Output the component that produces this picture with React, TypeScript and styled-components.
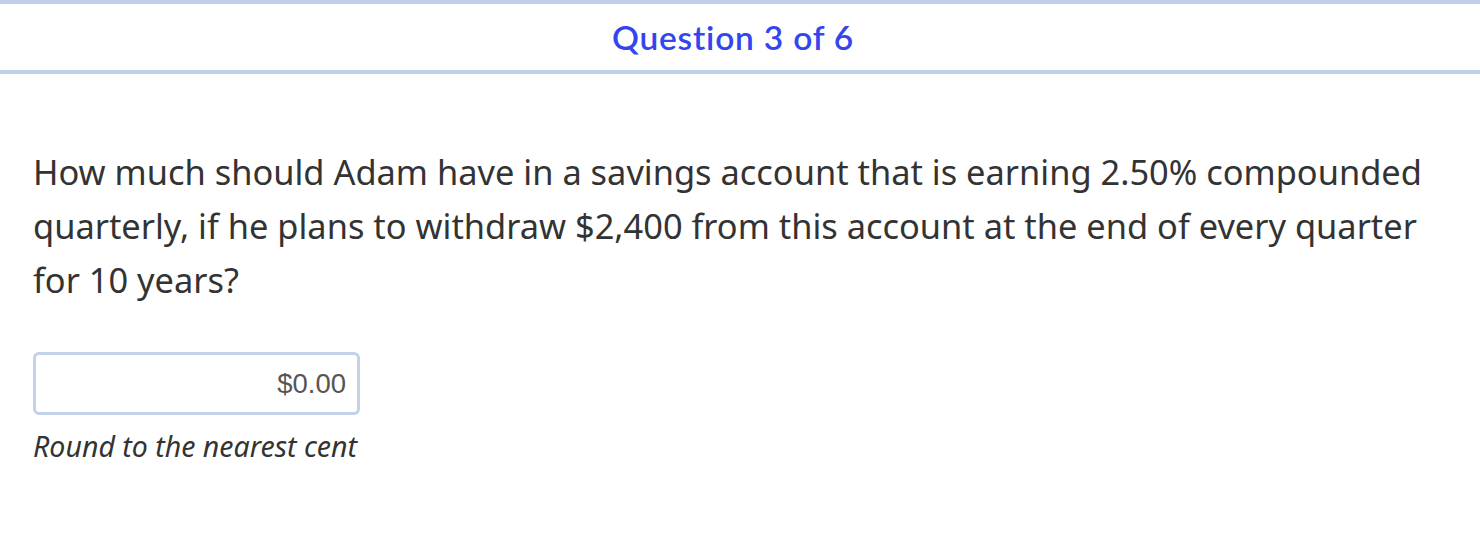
import styled, { createGlobalStyle } from "styled-components";

const GlobalStyle = createGlobalStyle`
	html, body {
		margin: 0;
		padding: 0;
		background: #ffffff;
	}
`;

const Page = styled.div`
	width: 1480px;
	height: 556px;
	overflow: hidden;
	background: #ffffff;
`;

const Header = styled.div`
	height: 66px;
	padding-right: 14px;
	border-top: 4px solid #bfcfe7;
	border-bottom: 4px solid #bfcfe7;
	display: flex;
	align-items: center;
	justify-content: center;
	font-family: Lato, "Open Sans", sans-serif;
	font-weight: 600;
	font-size: 33.5px;
	letter-spacing: 0.8px;
	color: #3346ee;
`;

const Body = styled.div`
	padding: 71px 33px 0 33px;
	font-family: "Noto Sans", "Open Sans", sans-serif;
	color: #333333;
`;

const QuestionText = styled.p`
	margin: 0;
	font-size: 34.4px;
	line-height: 54px;
`;

const AnswerField = styled.input`
	display: block;
	box-sizing: border-box;
	margin-top: 45px;
	width: 327px;
	height: 63px;
	border: 3px solid #c2d2e8;
	border-radius: 6px;
	padding: 0 11px;
	text-align: right;
	font-family: "Liberation Sans", Arial, sans-serif;
	font-size: 27.5px;
	color: #555555;
	background: #ffffff;
	outline: none;
	&::placeholder {
		color: #555555;
	}
`;

const Hint = styled.div`
	margin-top: 12px;
	font-size: 28.5px;
	font-style: italic;
	line-height: 38px;
	color: #333333;
`;

export default function App() {
	return (
		<Page>
			<GlobalStyle />
			<Header>Question 3 of 6</Header>
			<Body>
				<QuestionText>
					How much should Adam have in a savings account that is earning 2.50% compounded quarterly, if he plans to
					withdraw $2,400 from this account at the end of every quarter for 10 years?
				</QuestionText>
				<AnswerField type="text" placeholder="$0.00" readOnly />
				<Hint>Round to the nearest cent</Hint>
			</Body>
		</Page>
	);
}
